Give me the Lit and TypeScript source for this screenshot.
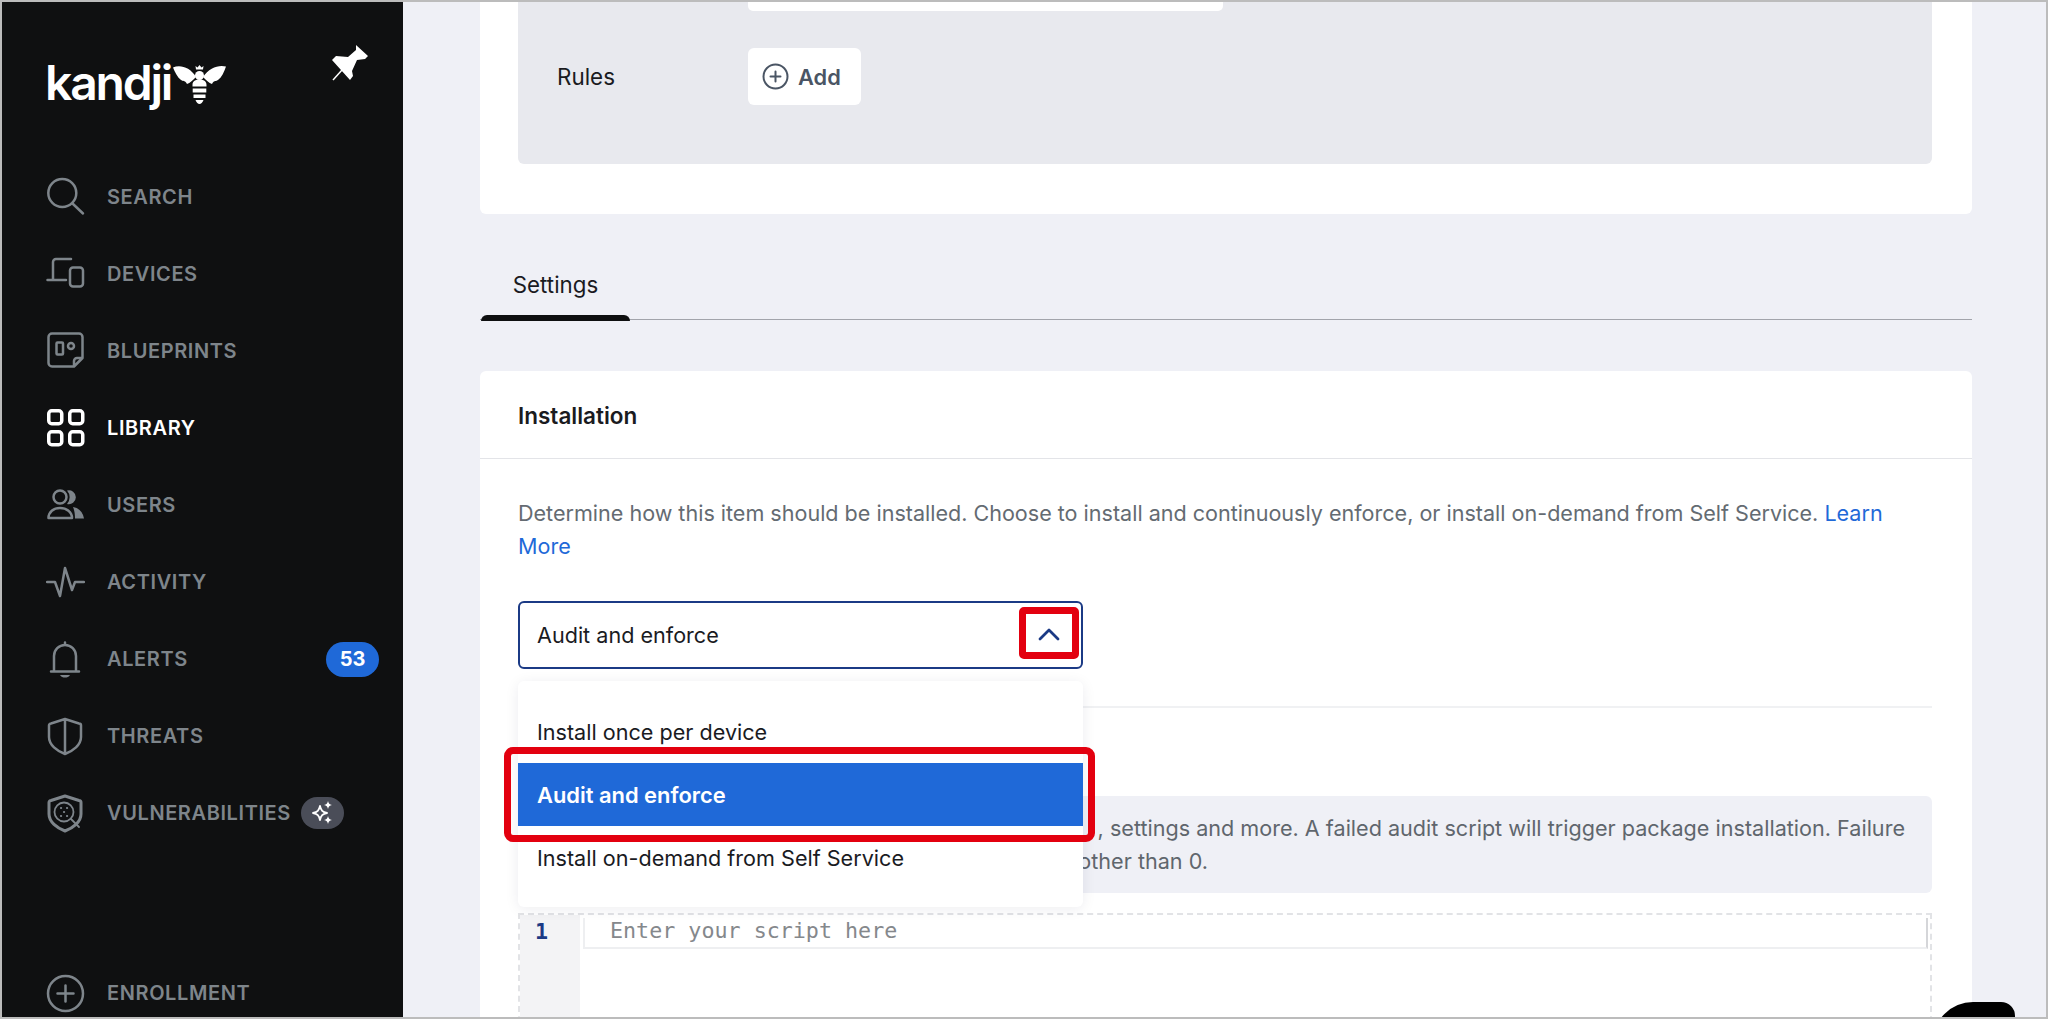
import { LitElement, html, css, svg } from "lit";
import { customElement } from "lit/decorators.js";

const nav = [
  { label: "SEARCH", icon: svg`<circle cx="16.3" cy="16" r="14" /><path d="M26.5 26.5 37 36.5" />` },
  { label: "DEVICES", icon: svg`<path d="M25 5H10a3 3 0 0 0-3 3v18M1.5 26H20" /><rect x="24" y="13.5" width="13" height="19" rx="3" />` },
  { label: "BLUEPRINTS", icon: svg`<path d="M6 2.5h27a3.500 3.500 0 0 1 3.500 3.500V27L28 35.500H6A3.500 3.500 0 0 1 2.500 32V6A3.500 3.500 0 0 1 6 2.500zM28 35v-5a3 3 0 0 1 3-3h5" /><rect x="10.500" y="11.500" width="6.500" height="12" rx="1" /><circle cx="25" cy="15" r="3" />` },
  { label: "LIBRARY", active: true, icon: svg`<g stroke-width="3.500"><rect x="2.750" y="2.750" width="13" height="13" rx="3" /><rect x="23.750" y="2.750" width="13" height="13" rx="3" /><rect x="2.750" y="23.750" width="13" height="13" rx="3" /><rect x="23.750" y="23.750" width="13" height="13" rx="3" /></g>` },
  { label: "USERS", icon: svg`<circle cx="14" cy="12" r="6.500" /><path d="M2.500 33c0-6 5-10 11.500-10s12 4 12 10z" /><path class="fill" d="M21 5.500a7 7 0 1 1 0 13.500 10 10 0 0 0 0-13.500zM27 22c6 1 10 5 11 11.500h-9c0-4-.5-8-2-11.500z" />` },
  { label: "ACTIVITY", icon: svg`<path d="M1 19h8l5 14 5-28 7 22 3-8h9" />` },
  { label: "ALERTS", badge: "53", icon: svg`<path d="M8 30V16a11 11 0 0 1 22 0v14M5 31.500h28M19 5V2.500" /><path class="fill" d="M14 35h10c-1 2-3 2.500-5 2.500s-4-.5-5-2.500z" />` },
  { label: "THREATS", icon: svg`<path d="M19 2 33 6.500a2 2 0 0 1 2 2V20c0 8-8 14-16 17C11 34 3 28 3 20V8.500a2 2 0 0 1 2-2zM19 2v35" />` },
  { label: "VULNERABILITIES", spark: true, icon: svg`<path stroke-width="3" d="M19 2 33 6.500a2 2 0 0 1 2 2V20c0 8-8 14-16 17C11 34 3 28 3 20V8.500a2 2 0 0 1 2-2z" /><circle cx="18" cy="18" r="9.500" stroke-width="1.800" /><path stroke-width="1.800" d="m25 25 8 8" /><path stroke-width="2.200" d="M15 14h.1M21 14h.1M18 18h.1M15 22h.1M21 22h.1" />` },
];

@customElement("app-root")
export class AppRoot extends LitElement {
  static styles = css`
    :host { display: flex; width: 2048px; height: 1019px; box-sizing: border-box; border: 2px solid #bcbcbc; overflow: hidden; position: relative; font-family: Inter, "Liberation Sans", sans-serif; background: #eff0f6; color: #1a1b1f; }
    .side { width: 401px; flex: none; background: #0f1011; display: flex; flex-direction: column; position: relative; }
    .top { height: 156px; display: flex; justify-content: space-between; padding: 42px 34px 0 43px; box-sizing: border-box; }
    .logo { display: flex; gap: 2px; height: 50px; color: #fff; }
    .word { font-size: 48px; font-weight: 600; line-height: 50px; letter-spacing: -2.200px; height: 50px; margin-top: 14px; }
    .bee { margin-top: 21px; }
    .pin { width: 37px; height: 37px; }
    .item { height: 77.100px; display: flex; align-items: center; padding-left: 44px; color: #7e858b; font-size: 20px; font-weight: 600; letter-spacing: .6px; }
    .item.active { color: #fff; }
    .item svg { width: 39px; height: 39px; flex: none; margin-right: 22px; fill: none; stroke: currentColor; stroke-width: 2.500; stroke-linecap: round; stroke-linejoin: round; }
    .item svg .fill { fill: currentColor; stroke: none; }
    .grow { flex: 1; }
    .badge { margin-left: auto; margin-right: 24px; width: 53px; height: 35px; border-radius: 18px; background: #1f69d8; color: #fff; font-size: 20px; font-weight: 700; letter-spacing: 0; display: flex; align-items: center; justify-content: center; }
    .spark { margin-left: 10px; width: 43px; height: 32px; border-radius: 16px; background: #4a4d58; display: flex; align-items: center; justify-content: center; }
    .item .spark svg { width: 28px; height: 28px; margin: 0; color: #fff; stroke-width: 1.800; }
    .enroll { height: 48px; }
    .main { flex: 1; min-width: 0; padding: 0 74px 0 77px; box-sizing: border-box; overflow: hidden; }
    .card { background: #fff; border-radius: 6px; }
    .card1 { height: 212px; padding: 0 40px 0 38px; border-radius: 0 0 6px 6px; box-sizing: border-box; }
    .panel { height: 162px; background: #e8e9ee; border-radius: 0 0 6px 6px; padding-left: 39px; box-sizing: border-box; }
    .strip { width: 475px; height: 9px; background: #fff; border-radius: 0 0 5px 5px; margin-left: 191px; }
    .rule { display: flex; align-items: center; margin-top: 37px; font-size: 22.400px; }
    .rule span { width: 191px; }
    .add { width: 113px; height: 57px; box-sizing: border-box; background: #fff; border-radius: 6px; display: flex; align-items: center; gap: 9px; padding-left: 14px; font-weight: 600; color: #4a5564; font-size: 21.800px; }
    .add svg { width: 27px; height: 27px; fill: none; stroke: #4a5564; stroke-width: 2; stroke-linecap: round; flex: none; }
    .tabs { height: 107px; position: relative; display: flex; align-items: flex-end; }
    .tabs::after { content: ""; position: absolute; left: 0; right: 0; bottom: 1px; height: 1px; background: #a2a4ab; }
    .tab { width: 149px; height: 49px; box-sizing: border-box; text-align: center; font-size: 22.300px; line-height: 26px; border-bottom: 6px solid transparent; position: relative; z-index: 1; margin-left: 1px; }
    .tab::after { content: ""; position: absolute; left: 0; right: 0; bottom: -6px; height: 6px; background: #0e0f10; border-radius: 6px 6px 0 0; }
    .card2 { margin-top: 50px; height: 660px; border-radius: 6px 6px 0 0; }
    .head { height: 88px; box-sizing: border-box; border-bottom: 1px solid #e3e4e8; padding: 1px 38px 0; display: flex; align-items: center; font-size: 22.500px; font-weight: 600; }
    .body { padding: 38px 40px 0 38px; }
    .desc { font-size: 21.550px; line-height: 33px; color: #646b72; }
    .desc a { color: #1f69d8; }
    .selectwrap { position: relative; width: 565px; margin-top: 38px; }
    .select { height: 68px; box-sizing: border-box; border: 2px solid #1b3a85; border-radius: 6px; display: flex; align-items: center; justify-content: space-between; padding: 0 21px 0 17px; font-size: 21.600px; }
    .select svg { width: 22px; height: 14px; fill: none; stroke: #1b3a85; stroke-width: 2.800; stroke-linecap: round; stroke-linejoin: round; margin-top: -2px; }
    .redsmall { position: absolute; left: 501px; top: 6px; width: 60px; height: 52px; box-sizing: border-box; border: 7px solid #e3000f; border-radius: 5px; }
    .pop { position: absolute; left: 0; right: 0; top: 80px; height: 226px; box-sizing: border-box; padding: 19px 0 18px; background: #fff; border-radius: 6px; box-shadow: 0 2px 14px rgba(20, 25, 60, .08); z-index: 3; font-size: 21.600px; }
    .opt { height: 63px; padding-left: 19px; display: flex; align-items: center; }
    .opt.sel { background: #1f69d8; color: #fff; font-weight: 600; font-size: 21.900px; }
    .redbig { position: absolute; left: -14px; top: 66px; width: 591px; height: 95px; box-sizing: border-box; border: 7px solid #e3000f; border-radius: 9px; }
    .divider { height: 2px; background: #f0f1f3; margin-top: 37px; }
    .alert { margin-top: 88px; height: 97px; box-sizing: border-box; background: #eff0f6; border-radius: 6px; padding: 16px 27px 16px 19px; font-size: 21.600px; line-height: 33px; color: #5f666d; white-space: nowrap; overflow: hidden; }
    .l1 { text-align: right; }
    .l2 { width: 671px; text-align: right; }
    .editor { margin-top: 20px; height: 130px; border: 2px dashed #e2e3e6; border-bottom: 0; box-sizing: border-box; display: flex; position: relative; }
    .gutter { width: 60px; background: #f3f3f5; flex: none; font-family: "DejaVu Sans Mono", monospace; font-size: 21.700px; font-weight: 700; color: #1b3a85; padding: 2px 0 0 15px; box-sizing: border-box; line-height: 30px; }
    .line { margin: 3px 2px 0 3px; flex: 1; height: 31px; box-sizing: border-box; border: 2px solid #eeeff1; border-top: 0; border-right-color: #d5d6d9; padding-left: 25px; font-family: "DejaVu Sans Mono", monospace; font-size: 21.700px; color: #85888c; line-height: 26px; }
    .chat { position: absolute; left: 1931px; top: 1000px; width: 82px; height: 40px; background: #000; border-radius: 40px 14px 0 0; z-index: 4; }
  `;

  render() {
    return html`
      <aside class="side">
        <div class="top">
          <div class="logo">
            <span class="word">kandji</span>
            <svg class="bee" width="53" height="40" viewBox="0 0 53 40" fill="#fff">
              <path d="M0 2.500C7 -.5 17 2 23 12c-3 3-6 6-9 7-2-4-3-2-6-4C4 12 2 7 0 2.500zM53 1.500c-7-2-17 1-23 10.500 3 3 6 6 9 7 2-4 3-2 6-4 4-3 6-8 8-13.500z" />
              <path d="M23 4.500 22.500 1l2 1.500L26.500 0l2 2.500 2-1.500-.5 3.500z" />
              <circle cx="26.500" cy="10.500" r="4.500" />
              <path d="M19.500 20c0-4 3-5.500 7-5.500s7 1.500 7 5.500v1.500h-14zM19.700 23.500h13.600v4H19.700zM20.500 29.500h12v3.500h-12zM22.500 35h8c-1 2.500-2.500 4-4 4s-3-1.500-4-4z" />
            </svg>
          </div>
          <svg class="pin" viewBox="0 0 37 37" fill="#fff"><path d="M24 1 36 12l-3 3-8 1-5 11 1 5-3 4L0 16l4-4 12 1 8-7z" /><path d="M10 26 1 36" stroke="#fff" stroke-width="1.500" /></svg>
        </div>
        ${nav.map((n) => html`
          <div class="item ${n.active ? "active" : ""}">
            <svg viewBox="0 0 39 39">${n.icon}</svg>${n.label}
            ${n.badge ? html`<span class="badge">${n.badge}</span>` : ""}
            ${n.spark ? html`<span class="spark"><svg viewBox="0 0 28 28"><path d="M12 7c1 4.500 2.500 6 7 7-4.500 1-6 2.500-7 7-1-4.500-2.500-6-7-7 4.500-1 6-2.500 7-7z" /><path class="fill" d="M20 2c.5 2.500 1.500 3.500 4 4-2.500.5-3.500 1.500-4 4-.5-2.500-1.500-3.500-4-4 2.500-.5 3.500-1.500 4-4zM20 17c.5 2.500 1.500 3.500 4 4-2.500.5-3.500 1.500-4 4-.5-2.500-1.500-3.500-4-4 2.500-.5 3.500-1.500 4-4z" /></svg></span>` : ""}
          </div>`)}
        <div class="grow"></div>
        <div class="item enroll">
          <svg viewBox="0 0 39 39"><circle cx="19.500" cy="19.500" r="17.500" /><path d="M19.500 11.500v16M11.500 19.500h16" /></svg>ENROLLMENT
        </div>
      </aside>
      <main class="main">
        <section class="card card1">
          <div class="panel">
            <div class="strip"></div>
            <div class="rule"><span>Rules</span>
              <div class="add"><svg viewBox="0 0 27 27"><circle cx="13.500" cy="13.500" r="12" /><path d="M13.500 8.500v10M8.500 13.500h10" /></svg>Add</div>
            </div>
          </div>
        </section>
        <div class="tabs"><div class="tab">Settings</div></div>
        <section class="card card2">
          <div class="head">Installation</div>
          <div class="body">
            <div class="desc">Determine how this item should be installed. Choose to install and continuously enforce, or install on-demand from Self Service. <a>Learn More</a></div>
            <div class="selectwrap">
              <div class="select">Audit and enforce
                <svg viewBox="0 0 22 14"><path d="M2 12 11 3l9 9" /></svg>
              </div>
              <div class="redsmall"></div>
              <div class="pop">
                <div class="opt">Install once per device</div>
                <div class="opt sel">Audit and enforce</div>
                <div class="opt">Install on-demand from Self Service</div>
                <div class="redbig"></div>
              </div>
            </div>
            <div class="divider"></div>
            <div class="alert"><div class="l1">, settings and more. A failed audit script will trigger package installation. Failure</div><div class="l2">other than 0.</div></div>
            <div class="editor"><div class="gutter">1</div><div class="line">Enter your script here</div></div>
          </div>
        </section>
      </main>
      <div class="chat"></div>
    `;
  }
}
